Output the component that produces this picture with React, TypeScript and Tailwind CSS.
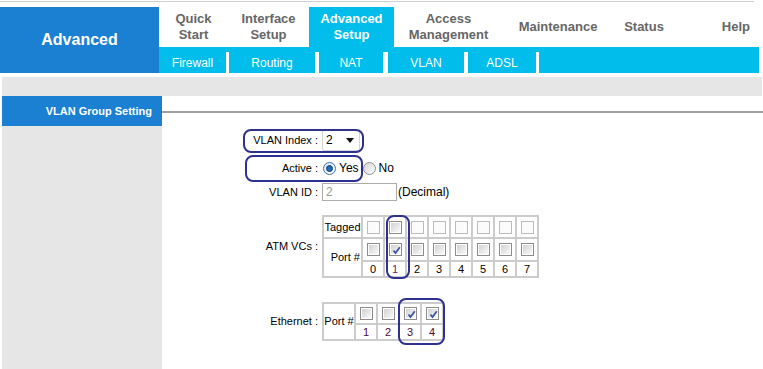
import React from "react";

const font = { fontFamily: '"Liberation Sans", Arial, sans-serif' };

function Check({ on = true, checked = false }: { on?: boolean; checked?: boolean }) {
  if (!on) {
    return <div className="w-[13px] h-[13px] border border-[#bcbcbc] bg-[#fbfbfb]" />;
  }
  return (
    <div className="relative w-[13px] h-[13px] border border-[#8c8c8c] bg-white p-[1px]">
      <div className="w-full h-full bg-gradient-to-br from-[#d2d2d2] to-[#fafafa]" />
      {checked && (
        <svg className="absolute left-[1px] top-[1px] w-[11px] h-[11px]" viewBox="0 0 11 11">
          <path d="M2.5 5.5 L4.5 8 L8.8 2.2" fill="none" stroke="#3b56a6" strokeWidth={1.8} />
        </svg>
      )}
    </div>
  );
}

function Radio({ checked }: { checked?: boolean }) {
  return (
    <div
      className={`w-[13px] h-[13px] rounded-full border flex items-center justify-center ${
        checked ? "border-[#3d6fa6] bg-gradient-to-br from-[#dfe9f5] to-[#ffffff]" : "border-[#8e8f8f] bg-gradient-to-br from-[#d6d6d6] to-[#fbfbfb]"
      }`}
    >
      {checked && <div className="w-[7px] h-[7px] rounded-full bg-[#1f6fb8] border border-[#0f3f7a]" />}
    </div>
  );
}

const Outline = ({ className }: { className: string }) => (
  <div className={`absolute border-2 border-[#2e3192] rounded-[8px] pointer-events-none ${className}`} />
);

export default function App() {
  const topMenu = [
    { label: ["Quick", "Start"], w: "w-[69px]" },
    { label: ["Interface", "Setup"], w: "w-[81px]" },
    { label: ["Advanced", "Setup"], w: "w-[85px]", active: true },
    { label: ["Access", "Management"], w: "w-[109px]" },
    { label: ["Maintenance"], w: "w-[110px]" },
    { label: ["Status"], w: "w-[62px]" },
  ];
  const subMenu = [
    { label: "Firewall", w: "w-[67px]", sep: "w-[3px]" },
    { label: "Routing", w: "w-[86px]", sep: "w-[4px]" },
    { label: "NAT", w: "w-[64px]", sep: "w-[5px]" },
    { label: "VLAN", w: "w-[76px]", sep: "w-[4px]" },
    { label: "ADSL", w: "w-[68px]", sep: "w-[3px]" },
  ];
  const atm = [0, 1, 2, 3, 4, 5, 6, 7];

  return (
    <div className="w-[763px] h-[369px] bg-white overflow-hidden text-black" style={font}>
      <div className="w-[754px] h-px mt-px bg-[#cfcfcf]" />
      <div className="h-[5px]" />

      {/* header */}
      <div className="flex h-[66px] w-[759px]">
        <div className="w-[159px] bg-[#1b7fd2] flex items-center justify-center text-white font-bold text-[16px]">
          Advanced
        </div>
        <div className="flex-1 flex flex-col">
          <div className="flex h-[40px]">
            {topMenu.map((m) => (
              <div
                key={m.label.join(" ")}
                className={`${m.w} flex flex-col items-center justify-center font-bold text-[13px] leading-[16px] ${
                  m.active ? "bg-[#00bdec] text-white" : "text-[#666666]"
                }`}
              >
                {m.label.map((l) => (
                  <span key={l}>{l}</span>
                ))}
              </div>
            ))}
            <div className="flex-1 flex items-center justify-end pr-[9px] font-bold text-[13px] text-[#666666]">Help</div>
          </div>
          <div className="h-[26px] bg-[#00bdec] flex pt-[5px]">
            {subMenu.map((s) => (
              <React.Fragment key={s.label}>
                <div className={`${s.w} flex items-center justify-center text-white text-[12px]`}>{s.label}</div>
                <div className={`${s.sep} bg-white`} />
              </React.Fragment>
            ))}
            <div className="flex-1" />
          </div>
        </div>
      </div>

      <div className="h-[4px]" />
      <div className="ml-[2px] w-[760px] h-[19px] bg-[#e6e6e6]" />

      {/* body */}
      <div className="flex ml-[2px] h-[273px]">
        <div className="w-[160px] flex flex-col bg-[#e6e6e6]">
          <div className="h-[30px] bg-[#1b7fd2] text-white font-bold text-[11px] flex items-center justify-end pr-[10px]">
            VLAN Group Setting
          </div>
        </div>

        <div className="flex-1 flex flex-col text-[11px]">
          <div className="h-[30px] pt-[15px]">
            <div className="h-[2px] bg-[#a0a0a0]" />
          </div>

          {/* VLAN Index */}
          <div className="relative h-[28px] flex items-center">
            <div className="w-[156px] text-right">VLAN Index :</div>
            <div className="ml-[4px] w-[38px] h-[21px] border border-[#d4d4d4] rounded-[2px] flex items-center justify-between pl-[3px] pr-[5px] text-[12px]">
              <span>2</span>
              <svg width="8" height="5" viewBox="0 0 8 5">
                <path d="M0 0 H8 L4 5 Z" fill="#111" />
              </svg>
            </div>
            <Outline className="left-[81px] top-[3px] w-[121px] h-[24px]" />
          </div>

          {/* Active */}
          <div className="relative h-[28px] flex items-center">
            <div className="w-[156px] text-right">Active :</div>
            <div className="ml-[5px] flex items-center">
              <Radio checked />
              <span className="ml-[3px] text-[12px]">Yes</span>
              <div className="ml-[4px]">
                <Radio />
              </div>
              <span className="ml-[3px] text-[12px]">No</span>
            </div>
            <Outline className="left-[83px] top-[1px] w-[118px] h-[27px]" />
          </div>

          {/* VLAN ID */}
          <div className="h-[20px] flex items-center">
            <div className="w-[156px] text-right">VLAN ID :</div>
            <div className="ml-[4px] w-[75px] h-[18px] border border-[#acacac] flex items-center pl-[3px] text-[12px] text-[#9a9a9a]">
              2
            </div>
            <span className="ml-[1px] text-[12px]">(Decimal)</span>
          </div>

          {/* ATM VCs */}
          <div className="mt-[13px] flex items-center">
            <div className="w-[156px] text-right">ATM VCs :</div>
            <div className="relative ml-[4px]">
              <div className="grid grid-cols-[37px_repeat(8,20px)] grid-rows-[20px_21px_14px] gap-[2px] p-[2px] bg-[#cccccc]">
                <div className="bg-white flex items-center justify-center whitespace-nowrap">Tagged</div>
                {atm.map((n) => (
                  <div key={"t" + n} className="bg-white flex items-center justify-center">
                    <Check on={n === 1} />
                  </div>
                ))}
                <div className="row-span-2 bg-white flex items-center justify-end pr-[1px] whitespace-nowrap">Port #</div>
                {atm.map((n) => (
                  <div key={"p" + n} className="bg-white flex items-center justify-center">
                    <Check checked={n === 1} />
                  </div>
                ))}
                {atm.map((n) => (
                  <div
                    key={"n" + n}
                    className={`bg-white flex items-center justify-center leading-none ${n === 1 ? "text-[#7a1a6a]" : "text-black"}`}
                  >
                    {n}
                  </div>
                ))}
              </div>
              <Outline className="left-[64px] top-0 w-[24px] h-[64px]" />
            </div>
          </div>

          {/* Ethernet */}
          <div className="mt-[24px] flex items-center">
            <div className="w-[156px] text-right">Ethernet :</div>
            <div className="relative ml-[4px]">
              <div className="grid grid-cols-[30px_repeat(4,20px)] grid-rows-[19px_14px] gap-[2px] p-[2px] bg-[#cccccc]">
                <div className="row-span-2 bg-white flex items-center justify-center whitespace-nowrap overflow-visible">
                  Port #
                </div>
                {[1, 2, 3, 4].map((n) => (
                  <div key={"e" + n} className="bg-white flex items-center justify-center">
                    <Check checked={n >= 3} />
                  </div>
                ))}
                {[1, 2, 3, 4].map((n) => (
                  <div key={"en" + n} className="bg-white flex items-center justify-center leading-none text-[#4a0a38]">
                    {n}
                  </div>
                ))}
              </div>
              <Outline className="left-[76px] top-[-4px] w-[47px] h-[47px]" />
            </div>
          </div>
        </div>
      </div>
    </div>
  );
}
